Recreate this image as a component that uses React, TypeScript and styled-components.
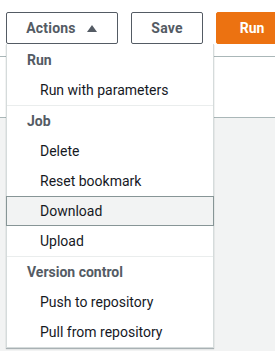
import { createGlobalStyle, styled } from 'styled-components'

const GlobalStyle = createGlobalStyle`
  html, body { margin: 0; padding: 0; }
  body {
    font-family: Roboto, "Liberation Sans", Arial, sans-serif;
    background: #f2f3f3;
  }
`

type MenuItem = { label: string; active?: boolean }
type MenuGroup = { title: string; items: MenuItem[] }

const groups: MenuGroup[] = [
  { title: 'Run', items: [{ label: 'Run with parameters' }] },
  {
    title: 'Job',
    items: [
      { label: 'Delete' },
      { label: 'Reset bookmark' },
      { label: 'Download', active: true },
      { label: 'Upload' },
    ],
  },
  {
    title: 'Version control',
    items: [{ label: 'Push to repository' }, { label: 'Pull from repository' }],
  },
]

export default function App() {
  return (
    <>
      <GlobalStyle />
      <Page>
        <Header>
          <Toolbar>
            <ActionsWrap>
              <Button $width={112}>
                Actions
                <Caret viewBox="0 0 12 10">
                  <path d="M1 9 L6 2 L11 9 Z" fill="#545b64" />
                </Caret>
              </Button>
              <Menu>
                {groups.map((g) => (
                  <Group key={g.title}>
                    <GroupTitle>{g.title}</GroupTitle>
                    {g.items.map((it) => (
                      <Item key={it.label} $active={it.active}>
                        {it.label}
                      </Item>
                    ))}
                  </Group>
                ))}
              </Menu>
            </ActionsWrap>
            <Button $width={72}>Save</Button>
            <PrimaryButton>Run</PrimaryButton>
          </Toolbar>
        </Header>
        <Panel />
        <Rest />
      </Page>
    </>
  )
}

const Page = styled.div`
  width: 275px;
  height: 351px;
  overflow: hidden;
  display: flex;
  flex-direction: column;
`

const Header = styled.div`
  height: 57px;
  background: #fff;
  border-bottom: 1px solid #aab7b8;
  box-sizing: border-box;
  padding: 12px 0 0 6px;
  flex-shrink: 0;
`

const Panel = styled.div`
  height: 61px;
  background: #fff;
  border-bottom: 1px solid #aab7b8;
  box-sizing: border-box;
  flex-shrink: 0;
`

const Rest = styled.div`
  flex: 1;
  background: #f2f3f3;
`

const Toolbar = styled.div`
  display: flex;
  gap: 13px;
`

const ActionsWrap = styled.div`
  position: relative;
  flex-shrink: 0;
`

const Button = styled.button<{ $width: number }>`
  width: ${(p) => p.$width}px;
  height: 32px;
  flex-shrink: 0;
  box-sizing: border-box;
  border: 1px solid #545b64;
  border-radius: 2px;
  background: #fff;
  color: #545b64;
  font-family: inherit;
  font-size: 14px;
  font-weight: 700;
  letter-spacing: 0.2px;
  display: flex;
  align-items: center;
  justify-content: center;
  gap: 10px;
  padding: 0;
`

const PrimaryButton = styled.button`
  width: 72px;
  height: 32px;
  box-sizing: border-box;
  border: 1px solid #ec7211;
  border-radius: 2px;
  background: #ec7211;
  color: #fff;
  font-family: inherit;
  font-size: 14px;
  font-weight: 700;
  padding: 0;
  flex-shrink: 0;
`

const Caret = styled.svg`
  width: 12px;
  height: 10px;
`

const Menu = styled.div`
  position: absolute;
  top: 32px;
  left: 0;
  width: 206px;
  background: #fff;
  border: 1px solid #d5dbdb;
  border-top: none;
  box-shadow: 0 1px 1px rgba(0, 28, 36, 0.3);
  z-index: 10;
  padding-top: 1px;
`

const Group = styled.div`
  & + & {
    border-top: 1px solid #eaeded;
  }
`

const GroupTitle = styled.div`
  height: 30px;
  line-height: 30px;
  padding-left: 20px;
  color: #545b64;
  font-size: 14px;
  font-weight: 700;
`

const Item = styled.div<{ $active?: boolean }>`
  height: 30px;
  line-height: 28px;
  box-sizing: border-box;
  padding-left: 33px;
  color: #16191f;
  font-size: 14px;
  border: 1px solid ${(p) => (p.$active ? '#879596' : 'transparent')};
  background: ${(p) => (p.$active ? '#f2f3f3' : 'transparent')};
  margin: 0 -1px;
`
